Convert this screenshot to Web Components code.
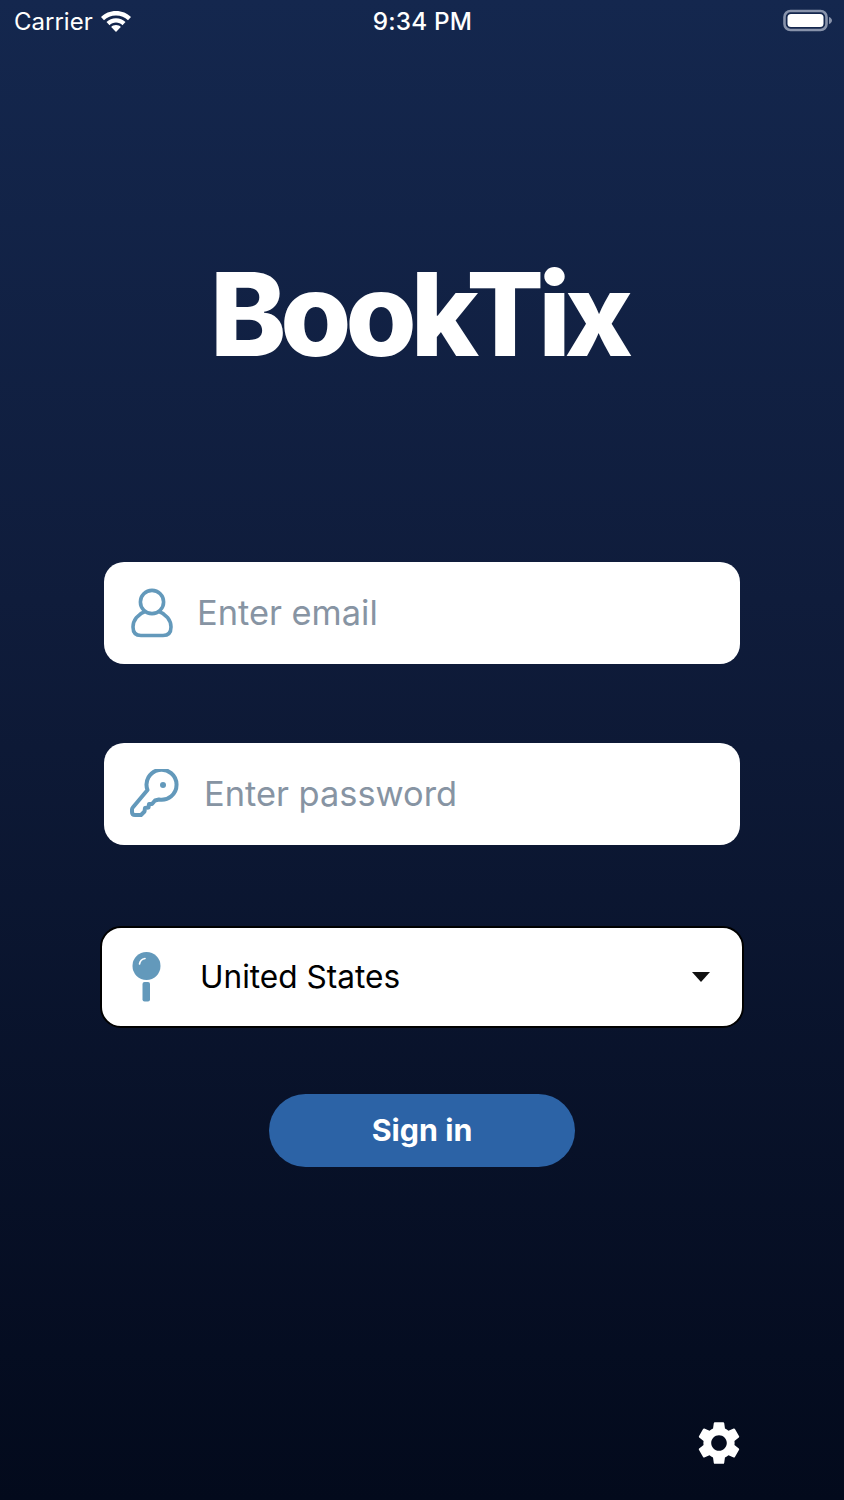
<!DOCTYPE html>
<html lang="en">
<head>
<meta charset="utf-8">
<title>BookTix</title>
<style>
  html, body { margin: 0; padding: 0; }
  body { background: #030a1c; font-family: Inter, "Liberation Sans", sans-serif; }
</style>
</head>
<body>
<app-screen>
  <status-bar></status-bar>
  <brand-title>BookTix</brand-title>
  <login-field placeholder="Enter email" gap="23" icon-left="26">
    <svg slot="icon" width="44" height="50" viewBox="0 0 44 50" fill="none" stroke="#6399bb" stroke-width="3.6">
      <circle cx="22" cy="14" r="11.600"/>
      <path d="M15 23.500C8 26 3 32 3 39c0 5.500 3 8.500 8 8.500h22c5 0 8-3 8-8.500 0-7-5-13-12-15.500"/>
    </svg>
  </login-field>
  <login-field placeholder="Enter password" gap="24" icon-left="26" style="margin-top:79px">
    <svg slot="icon" width="50" height="50" viewBox="0 0 50 50" fill="none" stroke="#6399bb" stroke-width="4" stroke-linejoin="round">
      <path d="M17.500 21A15 15 0 1 1 29 30.500L25 31.500 22 35H19L18.500 38.500 15 39 14.500 42.500 11 46H5C3 46 2 45 2 43V40.500C2 39.500 2.300 39 3 38.200Z"/>
      <circle cx="33" cy="16" r="3" fill="#6399bb" stroke="none"/>
    </svg>
  </login-field>
  <region-select>United States</region-select>
  <sign-in-button>Sign in</sign-in-button>
  <settings-button></settings-button>
</app-screen>

<script>
class AppScreen extends HTMLElement {
  connectedCallback() {
    this.attachShadow({ mode: "open" });
    this.shadowRoot.innerHTML = `
      <style>
        :host {
          background: linear-gradient(180deg, #14274e 0%, #0f1c3b 40%, #030a1c 100%);
          box-sizing: border-box;
          display: flex;
          flex-direction: column;
          height: 1500px;
          overflow: hidden;
          width: 844px;
        }
      </style>
      <slot></slot>
    `;
  }
}

class StatusBar extends HTMLElement {
  connectedCallback() {
    this.attachShadow({ mode: "open" });
    this.shadowRoot.innerHTML = `
      <style>
        :host {
          align-items: center;
          color: #fff;
          display: grid;
          font-family: Inter, "Liberation Sans", sans-serif;
          font-size: 24px;
          grid-template-columns: 1fr auto 1fr;
          height: 42px;
          padding: 0 11px 0 14px;
        }

        #left {
          align-items: center;
          display: flex;
          gap: 7px;
        }

        #time {
          font-size: 24.300px;
          font-weight: 500;
          letter-spacing: 0.2px;
          margin-left: -2px;
        }

        #right {
          display: flex;
          justify-content: flex-end;
        }

        svg {
          display: block;
        }
      </style>
      <div id="left">
        <span>Carrier</span>
        <svg width="32" height="24" viewBox="0 0 32 24" fill="#fff">
          <path d="M16 2C10 2 4.800 4.300 1 8l3 3.200C7 8.200 11.300 6.400 16 6.400s9 1.800 12 4.800L31 8C27.200 4.300 22 2 16 2z"/>
          <path d="M16 9.300c-3.800 0-7 1.400-9.500 3.800l3 3.100c1.700-1.600 4-2.600 6.500-2.600s4.800 1 6.500 2.600l3-3.100C23 10.700 19.800 9.300 16 9.300z"/>
          <path d="M16 16c-2 0-3.700.7-4.800 1.900L16 23l4.800-5.100C19.700 16.700 18 16 16 16z"/>
        </svg>
      </div>
      <span id="time">9:34 PM</span>
      <div id="right">
        <svg width="50" height="24" viewBox="0 0 50 24">
          <rect x="1.500" y="2" width="42" height="19" rx="6" fill="none" stroke="#8893ab" stroke-width="2.600"/>
          <rect x="4.500" y="5" width="36" height="13" rx="3.500" fill="#fff"/>
          <path d="M46 8c1.800.6 3 2 3 3.500s-1.200 2.900-3 3.500z" fill="#8893ab"/>
        </svg>
      </div>
    `;
  }
}

class BrandTitle extends HTMLElement {
  connectedCallback() {
    this.attachShadow({ mode: "open" });
    this.shadowRoot.innerHTML = `
      <style>
        :host {
          color: #fff;
          display: block;
          font-family: Inter, "Liberation Sans", sans-serif;
          font-size: 115px;
          font-weight: 800;
          letter-spacing: -6px;
          line-height: 140px;
          margin-bottom: 177px;
          margin-top: 203px;
          padding-right: 7px;
          text-align: center;
        }
      </style>
      <slot></slot>
    `;
  }
}

class LoginField extends HTMLElement {
  connectedCallback() {
    this.attachShadow({ mode: "open" });
    const placeholder = this.getAttribute("placeholder");
    this.shadowRoot.innerHTML = `
      <style>
        :host {
          align-items: center;
          align-self: center;
          background: #fff;
          border-radius: 20px;
          box-sizing: border-box;
          display: flex;
          font-family: Inter, "Liberation Sans", sans-serif;
          gap: ${this.getAttribute("gap")}px;
          height: 102px;
          padding-left: ${this.getAttribute("icon-left")}px;
          width: 636px;
        }

        #placeholder {
          color: #8794a3;
          font-size: 34.400px;
          padding-bottom: 2px;
        }

        ::slotted(svg) {
          display: block;
          flex: none;
        }
      </style>
      <slot name="icon"></slot>
      <span id="placeholder"></span>
    `;
    this.shadowRoot.getElementById("placeholder").textContent = placeholder;
  }
}

class RegionSelect extends HTMLElement {
  connectedCallback() {
    this.attachShadow({ mode: "open" });
    this.shadowRoot.innerHTML = `
      <style>
        :host {
          align-items: center;
          align-self: center;
          background: #fff;
          border: 2px solid #000;
          border-radius: 21px;
          box-sizing: border-box;
          color: #000;
          display: flex;
          font-family: Inter, "Liberation Sans", sans-serif;
          font-size: 31.600px;
          height: 102px;
          margin-top: 81px;
          padding: 0 32px 0 30px;
          width: 644px;
        }

        #pin {
          display: block;
          flex: none;
          margin-right: 39px;
        }

        #label {
          flex: 1;
          padding-bottom: 2px;
        }

        #caret {
          border-left: 9px solid transparent;
          border-right: 9px solid transparent;
          border-top: 10px solid #111;
          height: 0;
          width: 0;
        }
      </style>
      <svg id="pin" width="29" height="52" viewBox="0 0 29 52">
        <circle cx="14.500" cy="15" r="14" fill="#6399bb"/>
        <path d="M7.500 13c.5-3 2.500-5 5.500-5.500" fill="none" stroke="#fff" stroke-width="1.600" stroke-linecap="round"/>
        <rect x="10.500" y="31" width="7.500" height="19.500" rx="2" fill="#6399bb"/>
      </svg>
      <span id="label"><slot></slot></span>
      <span id="caret"></span>
    `;
  }
}

class SignInButton extends HTMLElement {
  connectedCallback() {
    this.attachShadow({ mode: "open" });
    this.shadowRoot.innerHTML = `
      <style>
        :host {
          align-items: center;
          align-self: center;
          background: #2c63a6;
          border-radius: 37px;
          box-sizing: border-box;
          color: #fff;
          display: flex;
          font-family: Inter, "Liberation Sans", sans-serif;
          font-size: 30.400px;
          font-weight: 700;
          height: 73px;
          justify-content: center;
          margin-top: 66px;
          padding-bottom: 2px;
          width: 306px;
        }
      </style>
      <slot></slot>
    `;
  }
}

class SettingsButton extends HTMLElement {
  connectedCallback() {
    this.attachShadow({ mode: "open" });
    this.shadowRoot.innerHTML = `
      <style>
        :host {
          align-self: flex-end;
          display: block;
          height: 52px;
          margin-bottom: 31px;
          margin-right: 99px;
          margin-top: auto;
          width: 52px;
        }

        svg {
          display: block;
        }
      </style>
      <svg width="52" height="52" viewBox="0 0 24 24" fill="#fff">
        <path d="M19.140 12.940c.04-.3.06-.61.06-.94 0-.32-.02-.64-.07-.94l2.030-1.580a.49.49 0 0 0 .12-.61l-1.920-3.320a.488.488 0 0 0-.59-.22l-2.390.96c-.5-.38-1.030-.7-1.620-.94l-.36-2.540a.484.484 0 0 0-.48-.41h-3.840c-.24 0-.43.17-.47.41l-.36 2.540c-.59.24-1.130.57-1.620.94l-2.390-.96c-.22-.08-.47 0-.59.22L2.740 8.870c-.12.21-.08.47.12.61l2.030 1.580c-.05.3-.09.63-.09.94s.02.64.07.94l-2.030 1.580a.49.49 0 0 0-.12.61l1.920 3.320c.12.22.37.29.59.22l2.390-.96c.5.38 1.030.7 1.620.94l.36 2.540c.05.24.24.41.48.41h3.840c.24 0 .44-.17.47-.41l.36-2.540c.59-.24 1.130-.56 1.620-.94l2.390.96c.22.08.47 0 .59-.22l1.920-3.320c.12-.22.07-.47-.12-.61l-2.010-1.580zM12 15.600c-1.980 0-3.600-1.620-3.600-3.600s1.620-3.600 3.600-3.600 3.600 1.620 3.600 3.600-1.620 3.600-3.600 3.600z"/>
      </svg>
    `;
  }
}

customElements.define("app-screen", AppScreen);
customElements.define("status-bar", StatusBar);
customElements.define("brand-title", BrandTitle);
customElements.define("login-field", LoginField);
customElements.define("region-select", RegionSelect);
customElements.define("sign-in-button", SignInButton);
customElements.define("settings-button", SettingsButton);
</script>
</body>
</html>
